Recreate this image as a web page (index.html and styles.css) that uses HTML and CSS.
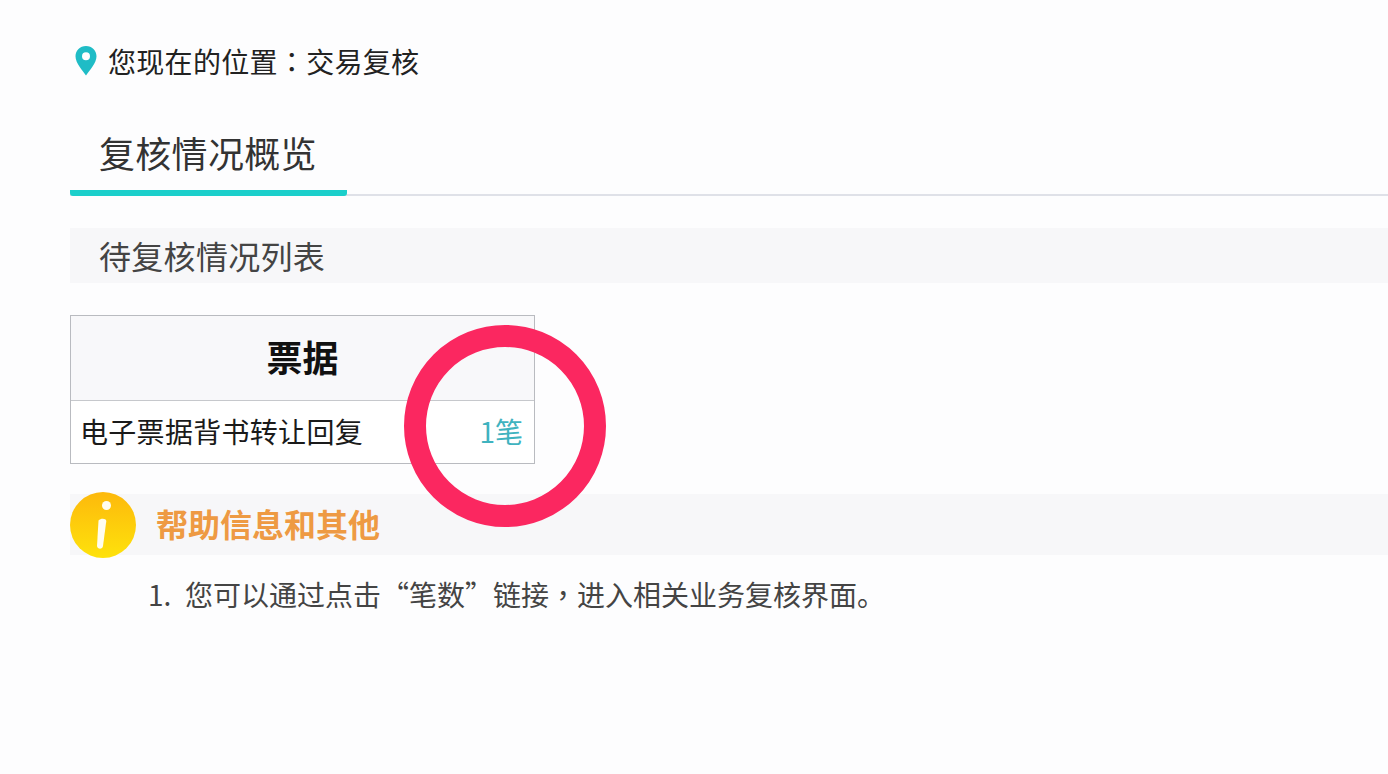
FILE: index.html
```html
<!DOCTYPE html>
<html lang="zh-CN">
<head>
  <meta charset="UTF-8">
  <meta name="viewport" content="width=device-width, initial-scale=1.0">
  <title>交易复核</title>
  <link rel="stylesheet" href="styles.css">
</head>
<body>
  <!-- Breadcrumb -->
  <div class="location">
    <svg class="pin" viewBox="0 0 22 30" width="22" height="30">
      <path fill="#1fbcc6" fill-rule="evenodd" d="M11 0C5 0 0.500 4.500 0.500 10.300C0.500 17 7.500 24.500 11 29.500C14.500 24.500 21.500 17 21.500 10.300C21.500 4.500 17 0 11 0ZM11 6.300A4 4 0 1 1 11 14.300A4 4 0 1 1 11 6.300Z"/>
    </svg>
    <span>您现在的位置<span class="punct" lang="zh-TW">：</span>交易复核</span>
  </div>

  <!-- Tab -->
  <div class="tabs">
    <div class="tab">复核情况概览</div>
  </div>

  <div class="section-title">待复核情况列表</div>

  <!-- Review table -->
  <div class="review-table">
    <div class="review-head">票据</div>
    <div class="review-row">
      <span>电子票据背书转让回复</span>
      <a href="#" class="count">1笔</a>
    </div>
  </div>

  <!-- Help -->
  <div class="help-bar">
    <div class="help-icon">
      <svg viewBox="0 0 66 68" width="66" height="68">
        <defs>
          <linearGradient id="helpFill" x1="0" y1="0" x2="0" y2="1">
            <stop offset="0" stop-color="#fdb90c"/>
            <stop offset="1" stop-color="#fee20c"/>
          </linearGradient>
        </defs>
        <circle cx="33" cy="34" r="33" fill="url(#helpFill)"/>
        <circle cx="36.500" cy="14.500" r="4.500" fill="#fffdf0"/>
        <path fill="#fffdf0" d="M28.500 29.500C30.500 27 36 27 36.300 30L33 55C32.500 58.500 27.500 58.500 27 55Z"/>
      </svg>
    </div>
    <span class="help-title">帮助信息和其他</span>
  </div>
  <div class="help-item">
    <span class="help-num">1.</span>
    <span>您可以通过点击“笔数”链接<span class="punct" lang="zh-TW">，</span>进入相关业务复核界面。</span>
  </div>

  <!-- Annotation ring drawn over the screenshot -->
  <div class="ring"></div>
</body>
</html>
```

FILE: styles.css
```css
body {
  margin: 0;
  padding: 0 0 0 70px;
  height: 774px;
  overflow: hidden;
  box-sizing: border-box;
  position: relative;
  background-color: #fdfdfe;
  color: #333;
  font-family: "Noto Sans CJK SC", "Liberation Sans", sans-serif;
}
.punct {
  font-family: "Noto Sans CJK TC", sans-serif;
}
.location {
  display: flex;
  align-items: center;
  height: 30px;
  padding: 46px 0 0 5px;
  font-size: 28px;
  letter-spacing: 0.3px;
  color: #222;
}
.pin {
  margin-right: 11px;
  flex: none;
}
.tabs {
  margin-top: 55px;
  border-bottom: 2px solid #dfe1e8;
  height: 63px;
}
.tab {
  width: 248px;
  height: 59px;
  padding-left: 29px;
  border-bottom: 6px solid #1bcfcb;
  border-radius: 0 0 3px 3px;
  font-size: 36px;
  letter-spacing: 0.3px;
  line-height: 42px;
  color: #333;
}
.section-title {
  margin-top: 32px;
  height: 55px;
  padding-left: 29px;
  background-color: #f7f7f9;
  font-size: 32px;
  letter-spacing: 0.3px;
  line-height: 54px;
  color: #444;
}
.review-table {
  width: 463px;
  margin-top: 32px;
  border: 1px solid #b9bbc0;
}
.review-head {
  height: 84px;
  background-color: #f8f8fa;
  border-bottom: 1px solid #c6c8cc;
  text-align: center;
  font-size: 36px;
  font-weight: bold;
  line-height: 81px;
  color: #111;
}
.review-row {
  display: flex;
  justify-content: space-between;
  align-items: center;
  box-sizing: border-box;
  height: 62px;
  padding: 0 11px 2px 10px;
  background-color: #fff;
  font-size: 28px;
  color: #1a1a1a;
}
.review-row span {
  margin-left: -1px;
  letter-spacing: 0.3px;
}
.count {
  color: #3fb3bf;
  text-decoration: none;
}
.help-bar {
  display: flex;
  align-items: center;
  height: 61px;
  margin-top: 30px;
  background-color: #f7f7f9;
}
.help-icon {
  flex: none;
  width: 66px;
  height: 68px;
  margin-right: 20px;
}
.help-title {
  padding-bottom: 3px;
  font-size: 32px;
  font-weight: bold;
  color: #ee9a43;
}
.help-item {
  display: flex;
  margin: 17px 0 0 78px;
  font-size: 28px;
  line-height: 44px;
  color: #444;
}
.help-num {
  flex: none;
  width: 37px;
}
.ring {
  position: absolute;
  left: 404px;
  top: 325px;
  width: 202px;
  height: 202px;
  box-sizing: border-box;
  border: 22px solid #fb2760;
  border-radius: 50%;
}
```
